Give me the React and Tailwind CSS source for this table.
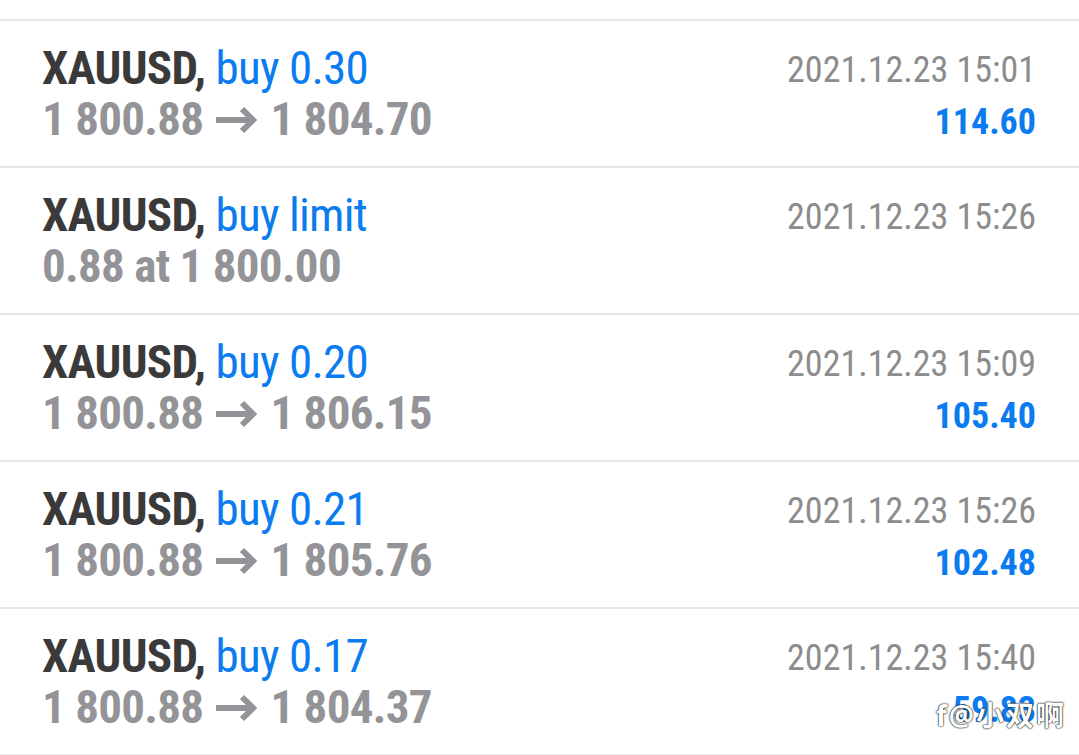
const trades = [
  { side: "buy 0.30", from: "1 800.88", to: "1 804.70", time: "2021.12.23 15:01", profit: "114.60" },
  { side: "buy limit", detail: "0.88 at 1 800.00", time: "2021.12.23 15:26", profit: "" },
  { side: "buy 0.20", from: "1 800.88", to: "1 806.15", time: "2021.12.23 15:09", profit: "105.40" },
  { side: "buy 0.21", from: "1 800.88", to: "1 805.76", time: "2021.12.23 15:26", profit: "102.48" },
  { side: "buy 0.17", from: "1 800.88", to: "1 804.37", time: "2021.12.23 15:40", profit: "59.83" },
];

function Arrow() {
  return (
    <svg width="42" height="30" viewBox="0 0 42 30" className="ml-[13px] mr-[12px] inline-block align-baseline" fill="none" stroke="#939398" strokeWidth="6">
      <path d="M0 15H37" />
      <path d="M26 4L37 15L26 26" strokeLinejoin="miter" />
    </svg>
  );
}

function TradeRow({ trade, last }) {
  return (
    <div className="relative flex h-[147px] justify-between border-t-2 border-[#e6e6e6] pl-[42px] pr-[43px]">
      <div className="pt-[21px] text-[47px] leading-[51px] tracking-[-0.7px]">
        <div className="whitespace-nowrap">
          <span className="font-bold text-[#3a3a3a]">XAUUSD,</span>{" "}
          <span className="text-[#0b7cf0]">{trade.side}</span>
        </div>
        <div className="whitespace-nowrap font-bold text-[#939398]">
          {trade.detail ? (
            trade.detail
          ) : (
            <>
              {trade.from}
              <Arrow />
              {trade.to}
            </>
          )}
        </div>
      </div>
      <div className="flex flex-col items-end pt-[23px] text-[36px] leading-[52px]">
        <div className="whitespace-nowrap text-[#8c8c8c]">{trade.time}</div>
        {trade.profit && <div className="font-bold text-[#0b7cf0]">{trade.profit}</div>}
      </div>
      {last && (
        <div className="absolute right-[13px] top-[85px] whitespace-nowrap text-[28px] font-bold tracking-[2px] text-white [text-shadow:0_0_2px_#000,0_0_1px_#000]" style={{ fontFamily: '"Noto Sans", "Noto Sans CJK SC", sans-serif' }}>
          f@小双啊
        </div>
      )}
    </div>
  );
}

export default function App() {
  return (
    <div className="h-[755px] w-[1079px] overflow-hidden bg-white" style={{ fontFamily: '"Roboto Condensed", Roboto, "Noto Sans CJK SC", sans-serif' }}>
      <div className="h-[19px]" />
      {trades.map((t, i) => (
        <TradeRow key={i} trade={t} last={i === trades.length - 1} />
      ))}
      <div className="border-t-2 border-[#e6e6e6]" />
    </div>
  );
}
